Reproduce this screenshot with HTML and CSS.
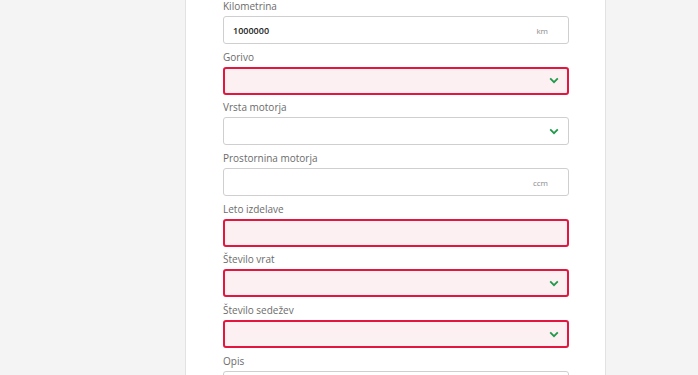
FILE: index.html
```
<!DOCTYPE html>
<html lang="sl">
<head>
<meta charset="utf-8">
<link rel="stylesheet" href="styles.css">
</head>
<body>
<div class="page">
  <aside class="side"></aside>
  <main class="card">
    <div class="field">
      <label class="label">Kilometrina</label>
      <div class="input">
        <span class="value">1000000</span>
        <span class="unit">km</span>
      </div>
    </div>
    <div class="field">
      <label class="label">Gorivo</label>
      <div class="input error select">
        <svg class="chev" viewBox="0 0 10 7" width="10" height="7"><path d="M1.2 1.4 L5 5.2 L8.8 1.4" fill="none" stroke="#1f9a4b" stroke-width="1.8"/></svg>
      </div>
    </div>
    <div class="field">
      <label class="label">Vrsta motorja</label>
      <div class="input select">
        <svg class="chev" viewBox="0 0 10 7" width="10" height="7"><path d="M1.2 1.4 L5 5.2 L8.8 1.4" fill="none" stroke="#1f9a4b" stroke-width="1.8"/></svg>
      </div>
    </div>
    <div class="field">
      <label class="label">Prostornina motorja</label>
      <div class="input">
        <span class="value"></span>
        <span class="unit">ccm</span>
      </div>
    </div>
    <div class="field">
      <label class="label">Leto izdelave</label>
      <div class="input error"></div>
    </div>
    <div class="field">
      <label class="label">Število vrat</label>
      <div class="input error select">
        <svg class="chev" viewBox="0 0 10 7" width="10" height="7"><path d="M1.2 1.4 L5 5.2 L8.8 1.4" fill="none" stroke="#1f9a4b" stroke-width="1.8"/></svg>
      </div>
    </div>
    <div class="field">
      <label class="label">Število sedežev</label>
      <div class="input error select">
        <svg class="chev" viewBox="0 0 10 7" width="10" height="7"><path d="M1.2 1.4 L5 5.2 L8.8 1.4" fill="none" stroke="#1f9a4b" stroke-width="1.8"/></svg>
      </div>
    </div>
    <div class="field">
      <label class="label">Opis</label>
      <div class="input tall"></div>
    </div>
  </main>
  <aside class="side right"></aside>
</div>
</body>
</html>
```

FILE: styles.css
```
html, body {
  margin: 0;
  padding: 0;
  height: 375px;
  overflow: hidden;
  background: #f4f4f4;
  font-family: "Open Sans", "Noto Sans", sans-serif;
}
.page {
  display: flex;
  height: 375px;
  overflow: hidden;
}
.side {
  width: 185px;
  flex: none;
  background: #f4f4f4;
}
.side.right {
  flex: 1;
  width: auto;
}
.card {
  flex: none;
  background: #fff;
  border-left: 1px solid #e2e2e2;
  border-right: 1px solid #e2e2e2;
  padding: 0 36px 0 37px;
  box-sizing: border-box;
  width: 421px;
}
.field {
  margin-bottom: 6.7px;
}
.label {
  display: block;
  font-size: 10px;
  line-height: 13px;
  height: 14px;
  margin-bottom: 2px;
  color: #6b6b6b;
}
.input {
  height: 28px;
  box-sizing: border-box;
  border: 1px solid #cfcfcf;
  border-radius: 3px;
  background: #fff;
  display: flex;
  align-items: center;
  justify-content: space-between;
  padding: 0 20px 0 9px;
}
.input.error {
  border: 2px solid #e2163f;
  background: #fdf0f2;
  padding: 0 19px 0 8px;
}
.input.select {
  justify-content: flex-end;
  padding-right: 9px;
}
.input.error.select {
  padding-right: 8px;
}
.input.tall {
  height: 60px;
}
.value {
  font-size: 9px;
  font-weight: 600;
  color: #222;
}
.unit {
  font-size: 8px;
  color: #8a8a8a;
}
.chev {
  display: block;
}
```
